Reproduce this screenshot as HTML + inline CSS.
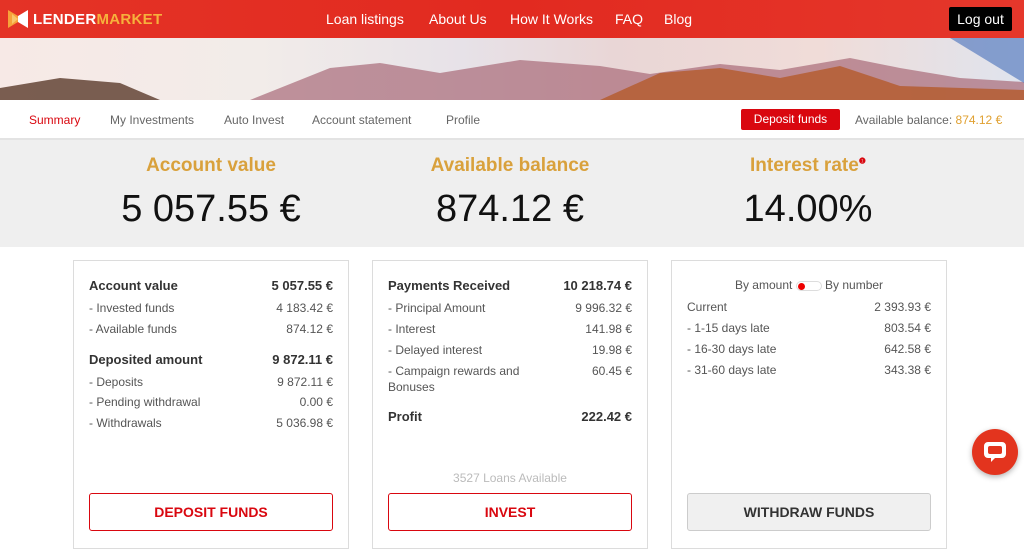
<!DOCTYPE html>
<html><head><meta charset="utf-8"><style>
*{box-sizing:border-box;margin:0;padding:0}
body{width:1024px;height:556px;overflow:hidden;font-family:"Liberation Sans",sans-serif;background:#fff;position:relative;color:#222}
.hdr{position:absolute;left:0;top:0;width:1024px;height:38px;background:linear-gradient(90deg,#e43326,#e22a20 50%,#e5372b);}
.logo{position:absolute;left:8px;top:10px}
.logotxt{position:absolute;left:33px;top:11px;font-weight:bold;font-size:15px;color:#fff;letter-spacing:.3px}
.logotxt span{color:#f6b13c}
.nav a{position:absolute;top:11px;color:#fff;font-size:14px;text-decoration:none}
.logout{position:absolute;left:949px;top:7px;width:63px;height:24px;background:#000;color:#fff;font-size:14px;text-align:center;line-height:24px;border-radius:2px}
.ban{position:absolute;left:0;top:38px;width:1024px;height:62px;overflow:hidden;background:linear-gradient(90deg,#f7e9e6 0%,#f2ece9 25%,#e7e2e8 45%,#e9d6d6 60%,#f0dcd8 80%,#dfe4ee 100%)}
.tabs{position:absolute;left:0;top:100px;width:1024px;height:40px;border-bottom:2px solid #e3e3e3;background:#fff}
.tabs span{position:absolute;top:13px;font-size:12px;color:#666}
.dep{position:absolute;left:741px;top:9px;width:99px;height:21px;background:#d9070f;color:#fff;font-size:12px;text-align:center;line-height:21px;border-radius:2px}
.gray{position:absolute;left:0;top:140px;width:1024px;height:107px;background:#efefef}
.h{position:absolute;top:155px;width:300px;text-align:center;font-size:19px;font-weight:bold;color:#d9a13c}
.big{position:absolute;top:188px;width:300px;text-align:center;font-size:38px;color:#111}
.card{position:absolute;top:260px;width:276px;height:289px;border:1px solid #dcdcdc;background:#fff}
.r{position:absolute;left:15px;right:15px;font-size:12px;color:#555;display:flex;justify-content:space-between}
.r.b{font-size:13px;font-weight:bold;color:#333}
.btn{position:absolute;left:15px;top:232px;width:244px;height:38px;border:1px solid #d9070f;border-radius:3px;color:#d9070f;font-weight:bold;font-size:14px;text-align:center;line-height:36px}
</style></head><body>
<div class="hdr">
<svg class="logo" width="20" height="18" viewBox="0 0 20 18"><polygon points="0,0 10,6 10,12 0,18" fill="#f7a23a"/><polygon points="20,0 10,6 10,12 20,18" fill="#fff"/><polygon points="4,4 10,9 4,14" fill="#f9c76a"/></svg>
<div class="logotxt">LENDER<span>MARKET</span></div>
<div class="nav"><a style="left:326px">Loan listings</a><a style="left:429px">About Us</a><a style="left:510px">How It Works</a><a style="left:615px">FAQ</a><a style="left:664px">Blog</a></div>
<div class="logout">Log out</div>
</div>
<div class="ban"><svg width="1024" height="62" viewBox="0 0 1024 62" preserveAspectRatio="none">
<path d="M0,50 L60,40 L120,45 L160,62 L0,62Z" fill="#5a3a2a" opacity=".8"/>
<path d="M250,62 L330,30 L380,25 L440,35 L520,22 L600,28 L650,36 L720,26 L780,32 L850,20 L900,30 L960,40 L1024,44 L1024,62Z" fill="#a86a78" opacity=".7"/>
<path d="M600,62 L660,35 L720,30 L780,40 L840,28 L900,48 L1024,52 L1024,62Z" fill="#b45a2a" opacity=".8"/>
<path d="M950,0 L1024,0 L1024,45Z" fill="#5b7fc0" opacity=".7"/>
</svg></div>
<div class="tabs">
<span style="left:29px;color:#d9070f">Summary</span><span style="left:110px">My Investments</span><span style="left:224px">Auto Invest</span><span style="left:312px">Account statement</span><span style="left:446px">Profile</span>
<div class="dep">Deposit funds</div>
<span style="left:855px">Available balance: <b style="font-weight:normal;color:#e0a030">874.12 €</b></span>
</div>
<div class="gray"></div>
<div class="h" style="left:61px">Account value</div><div class="big" style="left:61px">5 057.55 €</div>
<div class="h" style="left:360px">Available balance</div><div class="big" style="left:360px">874.12 €</div>
<div class="h" style="left:658px">Interest rate<sup style="color:#d9070f;font-size:8px">❶</sup></div><div class="big" style="left:658px">14.00%</div>

<div class="card" style="left:73px">
<div class="r b" style="top:17px"><span>Account value</span><span>5 057.55 €</span></div>
<div class="r" style="top:40px"><span>- Invested funds</span><span>4 183.42 €</span></div>
<div class="r" style="top:61px"><span>- Available funds</span><span>874.12 €</span></div>
<div class="r b" style="top:91px"><span>Deposited amount</span><span>9 872.11 €</span></div>
<div class="r" style="top:114px"><span>- Deposits</span><span>9 872.11 €</span></div>
<div class="r" style="top:134px"><span>- Pending withdrawal</span><span>0.00 €</span></div>
<div class="r" style="top:155px"><span>- Withdrawals</span><span>5 036.98 €</span></div>
<div class="btn">DEPOSIT FUNDS</div>
</div>
<div class="card" style="left:372px">
<div class="r b" style="top:17px"><span>Payments Received</span><span>10 218.74 €</span></div>
<div class="r" style="top:40px"><span>- Principal Amount</span><span>9 996.32 €</span></div>
<div class="r" style="top:61px"><span>- Interest</span><span>141.98 €</span></div>
<div class="r" style="top:82px"><span>- Delayed interest</span><span>19.98 €</span></div>
<div class="r" style="top:102px;line-height:16px"><span>- Campaign rewards and<br>Bonuses</span><span>60.45 €</span></div>
<div class="r b" style="top:148px"><span>Profit</span><span>222.42 €</span></div>
<div style="position:absolute;top:210px;width:100%;text-align:center;font-size:12px;color:#bbb">3527 Loans Available</div>
<div class="btn">INVEST</div>
</div>
<div class="card" style="left:671px">
<div style="position:absolute;top:17px;width:100%;text-align:center;font-size:12px;color:#555">By amount <span style="display:inline-block;width:26px;height:10px;border:1px solid #ddd;border-radius:6px;vertical-align:middle;position:relative"><span style="position:absolute;left:1px;top:1px;width:7px;height:7px;border-radius:50%;background:#e00"></span></span> By number</div>
<div class="r" style="top:39px"><span>Current</span><span>2 393.93 €</span></div>
<div class="r" style="top:60px"><span>- 1-15 days late</span><span>803.54 €</span></div>
<div class="r" style="top:81px"><span>- 16-30 days late</span><span>642.58 €</span></div>
<div class="r" style="top:102px"><span>- 31-60 days late</span><span>343.38 €</span></div>
<div class="btn" style="background:#f0f0f0;border-color:#ccc;color:#333">WITHDRAW FUNDS</div>
</div>
<div style="position:absolute;left:972px;top:429px;width:46px;height:46px;border-radius:50%;background:#e3341e;box-shadow:0 2px 6px rgba(0,0,0,.3)">
<svg width="46" height="46" viewBox="0 0 46 46"><path d="M16,13 h14 a4,4 0 0 1 4,4 v8 a4,4 0 0 1 -4,4 h-7 l-4,4 v-4 h-3 a4,4 0 0 1 -4,-4 v-8 a4,4 0 0 1 4,-4z" fill="#fff"/><rect x="16" y="17" width="14" height="8" rx="2" fill="#e3341e"/></svg>
</div>
</body></html>
